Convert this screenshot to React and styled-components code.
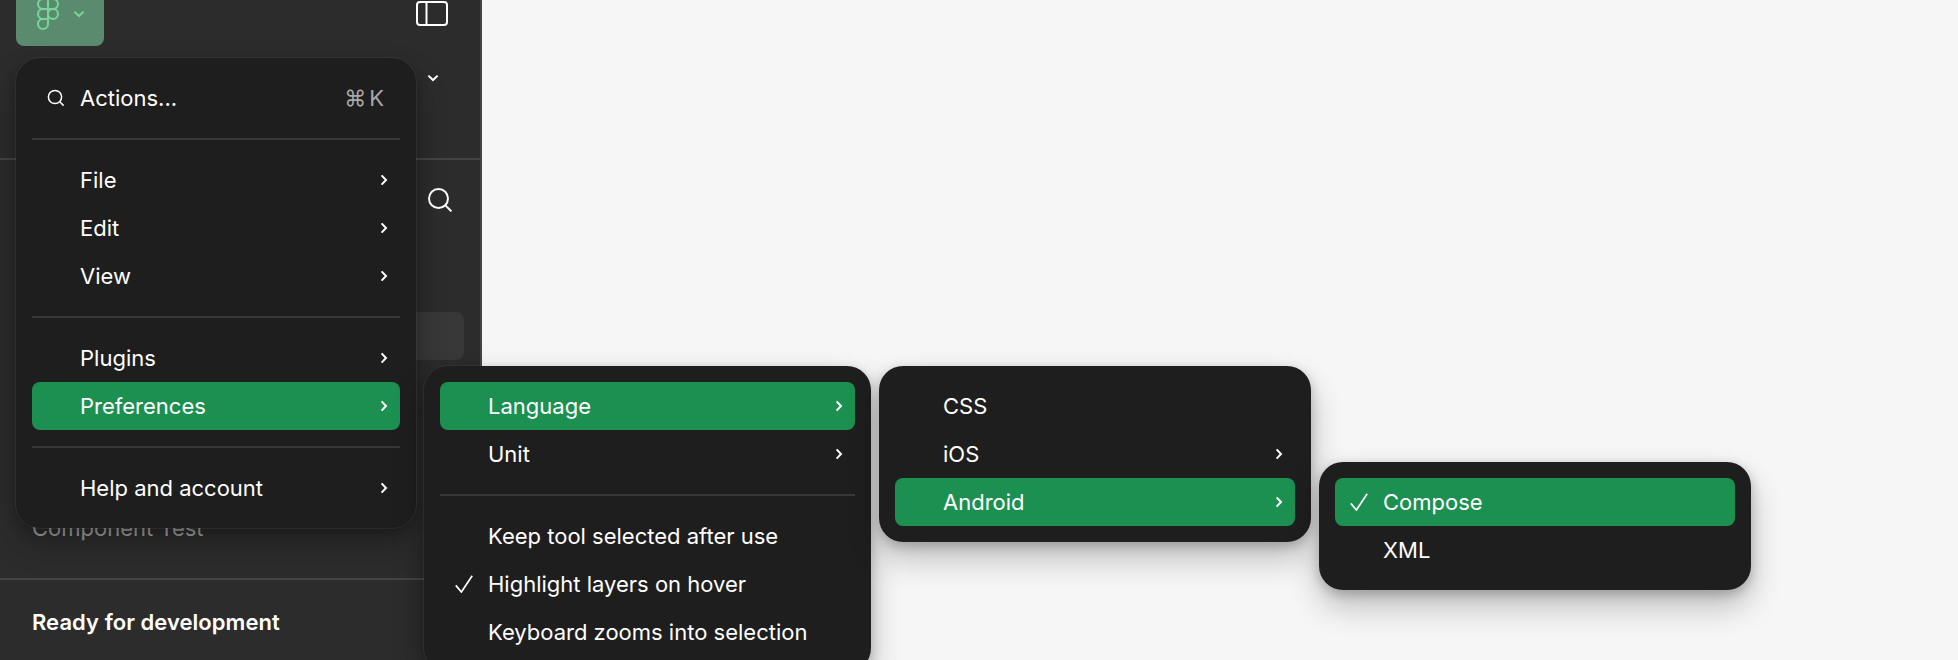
import React from 'react'
import styled, { createGlobalStyle } from 'styled-components'

const GlobalStyle = createGlobalStyle`
  html, body {
    margin: 0;
    height: 100%;
    overflow: hidden;
    background: #f6f6f6;
    font-family: Inter, "Noto Sans", sans-serif;
  }
`

const Page = styled.div`
  position: relative;
  width: 1958px;
  height: 660px;
  overflow: hidden;
  background: #f6f6f6;
`

const Sidebar = styled.aside`
  width: 480px;
  height: 660px;
  box-sizing: content-box;
  background: #2c2c2c;
  border-right: 2px solid #444;
  display: flex;
  flex-direction: column;
  color: #fff;
`

const TopBar = styled.div`
  height: 158px;
  flex: none;
  border-bottom: 2px solid #444;
  padding: 0 32px 0 16px;
  box-sizing: content-box;
  width: 432px;
`

const TopRow = styled.div`
  display: flex;
  align-items: flex-start;
  justify-content: space-between;
`

const LogoButton = styled.div`
  width: 88px;
  height: 46px;
  border-radius: 0 0 8px 8px;
  background: #5a8b6e;
  display: flex;
  align-items: flex-start;
  gap: 12px;
  padding-left: 21px;
  box-sizing: border-box;
`

const LogoChevron = styled.div`
  display: flex;
  margin-top: 10px;
`

const PanelButton = styled.div`
  width: 32px;
  height: 26px;
  margin-top: 1px;
`

const ChevronRow = styled.div`
  display: flex;
  justify-content: flex-end;
  padding: 28px 9px 0 0;
`

const PagesSection = styled.section`
  height: 390px;
  flex: none;
  padding: 28px 16px 0;
  border-bottom: 2px solid #444;
  box-sizing: content-box;
  width: 448px;
`

const SearchRow = styled.div`
  display: flex;
  justify-content: flex-end;
  padding-right: 12px;
  height: 24px;
`

const PageRow = styled.div`
  height: 48px;
  margin-top: ${({ $gap }) => $gap}px;
  padding: 0 16px;
  border-radius: 8px;
  background: ${({ $selected }) => ($selected ? '#383838' : 'transparent')};
  color: #a3a3a3;
  font-size: 22px;
  line-height: 48px;
`

const Footer = styled.div`
  padding: 26px 32px 0;
  font-size: 22px;
  line-height: 32px;
  font-weight: 600;
  letter-spacing: 0.05px;
`

const MenuLayer = styled.div`
  position: absolute;
  top: 0;
  left: 16px;
  display: flex;
  align-items: flex-start;
  gap: 8px;
`

const Menu = styled.div`
  flex: none;
  width: ${({ $width }) => $width}px;
  margin-top: ${({ $top }) => $top}px;
  padding: 16px 0;
  border-radius: 24px;
  background: #1e1e1e;
  box-shadow: 0 0 0 1px rgba(255, 255, 255, 0.06), 0 16px 32px rgba(0, 0, 0, 0.24), 0 4px 12px rgba(0, 0, 0, 0.22);
`

const Item = styled.div`
  height: 48px;
  margin: 0 16px;
  display: grid;
  grid-template-columns: 48px 1fr auto;
  align-items: center;
  border-radius: 8px;
  background: ${({ $active }) => ($active ? '#1c9051' : 'transparent')};
  color: #fff;
  font-size: 22px;
  line-height: 48px;
`

const ItemIcon = styled.span`
  display: flex;
  justify-content: center;
  align-items: center;
`

const Arrow = styled.span`
  display: flex;
  padding-right: 12px;
`

const Shortcut = styled.span`
  color: #a8a8a8;
  padding-right: 16px;
  display: flex;
  gap: 3px;
`

const Divider = styled.div`
  height: 2px;
  margin: 16px 16px;
  background: #383838;
`

const ChevronRight = () => (
  <svg width="8" height="12" viewBox="0 0 8 12" fill="none">
    <path d="M1.6 1.4 6 6l-4.4 4.6" stroke="#fff" strokeWidth="2" />
  </svg>
)

const Check = () => (
  <svg width="18" height="18" viewBox="0 0 18 18" fill="none">
    <path d="M.8 10.4 6.4 17 17.2.8" stroke="#fff" strokeWidth="1.7" />
  </svg>
)

const SearchSmall = () => (
  <svg width="18" height="18" viewBox="0 0 18 18" fill="none">
    <circle cx="8" cy="8" r="6.6" stroke="#fff" strokeWidth="1.5" />
    <path d="m12.8 12.8 3.8 3.8" stroke="#fff" strokeWidth="1.5" />
  </svg>
)

const SearchLarge = () => (
  <svg width="24" height="24" viewBox="0 0 24 24" fill="none">
    <circle cx="10.5" cy="10.5" r="9.5" stroke="#fff" strokeWidth="2" />
    <path d="m17.4 17.4 6 6" stroke="#fff" strokeWidth="2" />
  </svg>
)

const PanelIcon = () => (
  <svg width="32" height="26" viewBox="0 0 32 26" fill="none">
    <rect x="1" y="1" width="30" height="23" rx="3" stroke="#fff" strokeWidth="2" />
    <path d="M10.5 1v23" stroke="#fff" strokeWidth="2" />
  </svg>
)

const ChevronDown = ({ color = '#fff' }) => (
  <svg width="12" height="8" viewBox="0 0 12 8" fill="none">
    <path d="M1.4 1.6 6 6l4.6-4.4" stroke={color} strokeWidth="2" />
  </svg>
)

// only the lower part of the mark shows, the rest is above the page
const FigmaMark = () => (
  <svg width="24" height="32" viewBox="0 0 24 32" fill="none" stroke="#79d59a" strokeWidth="2">
    <path d="M11 -1H6a5 5 0 0 0 0 10h5zM11 -1h5a5 5 0 0 1 0 10h-5z" />
    <path d="M11 9H6a5 5 0 0 0 0 10h5z" />
    <circle cx="16" cy="14" r="5" />
    <path d="M6 19h5v5A5 5 0 1 1 6 19z" />
  </svg>
)

const MenuItem = ({ label, icon, arrow, active }) => (
  <Item $active={active}>
    <ItemIcon>{icon}</ItemIcon>
    <span>{label}</span>
    {arrow ? <Arrow><ChevronRight /></Arrow> : <span />}
  </Item>
)

export default function App() {
  return (
    <Page>
      <GlobalStyle />
      <Sidebar>
        <TopBar>
          <TopRow>
            <LogoButton>
              <FigmaMark />
              <LogoChevron><ChevronDown color="#79d59a" /></LogoChevron>
            </LogoButton>
            <PanelButton><PanelIcon /></PanelButton>
          </TopRow>
          <ChevronRow><ChevronDown /></ChevronRow>
        </TopBar>
        <PagesSection>
          <SearchRow><SearchLarge /></SearchRow>
          <PageRow $selected $gap={100} />
          <PageRow $gap={144}>Component Test</PageRow>
        </PagesSection>
        <Footer>Ready for development</Footer>
      </Sidebar>

      <MenuLayer>
        <Menu $width={400} $top={58}>
          <Item>
            <ItemIcon><SearchSmall /></ItemIcon>
            <span>Actions...</span>
            <Shortcut><span>⌘</span><span>K</span></Shortcut>
          </Item>
          <Divider />
          <MenuItem label="File" arrow />
          <MenuItem label="Edit" arrow />
          <MenuItem label="View" arrow />
          <Divider />
          <MenuItem label="Plugins" arrow />
          <MenuItem label="Preferences" arrow active />
          <Divider />
          <MenuItem label="Help and account" arrow />
        </Menu>

        <Menu $width={447} $top={366}>
          <MenuItem label="Language" arrow active />
          <MenuItem label="Unit" arrow />
          <Divider />
          <MenuItem label="Keep tool selected after use" />
          <MenuItem label="Highlight layers on hover" icon={<Check />} />
          <MenuItem label="Keyboard zooms into selection" />
        </Menu>

        <Menu $width={432} $top={366}>
          <MenuItem label="CSS" />
          <MenuItem label="iOS" arrow />
          <MenuItem label="Android" arrow active />
        </Menu>

        <Menu $width={432} $top={462}>
          <MenuItem label="Compose" icon={<Check />} active />
          <MenuItem label="XML" />
        </Menu>
      </MenuLayer>
    </Page>
  )
}
